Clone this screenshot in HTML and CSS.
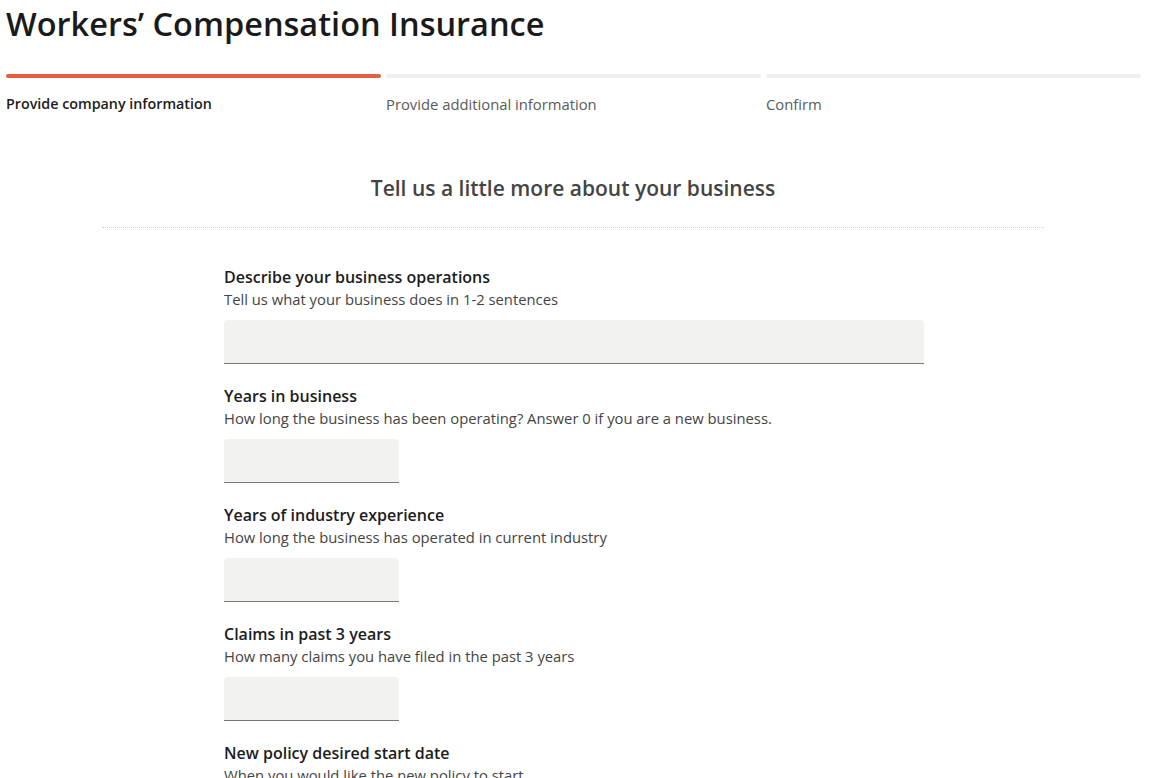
FILE: index.html
```html
<!DOCTYPE html>
<html>
<head>
    <title>Workers' Compensation Insurance</title>
    <link rel="stylesheet" href="styles.css">
</head>

<body>
    <div class="page">
        <h1 class="title">Workers’ Compensation Insurance</h1>

        <div class="steps">
            <div class="step active">
                <div class="bar"></div>
                <div class="step-label">Provide company information</div>
            </div>
            <div class="step">
                <div class="bar"></div>
                <div class="step-label">Provide additional information</div>
            </div>
            <div class="step">
                <div class="bar"></div>
                <div class="step-label">Confirm</div>
            </div>
        </div>

        <div class="section">
            <h2 class="section-title">Tell us a little more about your business</h2>
        </div>

        <form class="form">
            <div class="field">
                <label class="field-label">Describe your business operations</label>
                <div class="field-help">Tell us what your business does in 1-2 sentences</div>
                <input type="text" class="input wide">
            </div>
            <div class="field">
                <label class="field-label">Years in business</label>
                <div class="field-help">How long the business has been operating? Answer 0 if you are a new business.</div>
                <input type="text" class="input short">
            </div>
            <div class="field">
                <label class="field-label">Years of industry experience</label>
                <div class="field-help">How long the business has operated in current industry</div>
                <input type="text" class="input short">
            </div>
            <div class="field">
                <label class="field-label">Claims in past 3 years</label>
                <div class="field-help">How many claims you have filed in the past 3 years</div>
                <input type="text" class="input short">
            </div>
            <div class="field">
                <label class="field-label">New policy desired start date</label>
                <div class="field-help">When you would like the new policy to start</div>
                <input type="text" class="input short">
            </div>
        </form>
    </div>
</body>

</html>
```

FILE: styles.css
```css
body {
    margin: 0;
    font-family: "Open Sans", "Lato", sans-serif;
    color: #1c1c1c;
    background: #fff;
}

.page {
    padding: 0 19px 0 6px;
}

.title {
    margin: 0;
    padding-top: 3px;
    font-size: 32.5px;
    font-weight: 600;
    line-height: 42px;
    color: #1a1a1a;
}

.steps {
    display: flex;
    gap: 5px;
    margin-top: 29px;
}

.step {
    flex: 1;
}

.bar {
    height: 4px;
    border-radius: 2px;
    background-color: #efefef;
}

.step.active .bar {
    background-color: #e06040;
}

.step-label {
    margin-top: 16px;
    font-size: 14.8px;
    line-height: 20px;
    color: #5a5a5a;
}

.step.active .step-label {
    font-size: 14.3px;
    color: #1c1c1c;
    font-weight: 600;
}

.section {
    width: 942px;
    margin: 62px 0 0 96px;
    border-bottom: 1px dotted #cfcfcf;
    padding-bottom: 27px;
}

.section-title {
    margin: 0;
    text-align: center;
    font-size: 21px;
    line-height: 24px;
    font-weight: 600;
    color: #444;
}

.form {
    width: 700px;
    margin: 38px 0 0 218px;
}

.field {
    margin-bottom: 21px;
}

.field-label {
    display: block;
    font-size: 16px;
    line-height: 22px;
    font-weight: 600;
    color: #1c1c1c;
}

.field-help {
    margin-top: 1px;
    font-size: 14.8px;
    line-height: 20px;
    color: #444;
}

.input {
    display: block;
    box-sizing: border-box;
    height: 44px;
    margin-top: 11px;
    background-color: #f2f2f0;
    border: none;
    border-bottom: 1px solid #777;
    border-radius: 4px 4px 0 0;
}

.input.wide {
    width: 700px;
}

.input.short {
    width: 175px;
}
```
